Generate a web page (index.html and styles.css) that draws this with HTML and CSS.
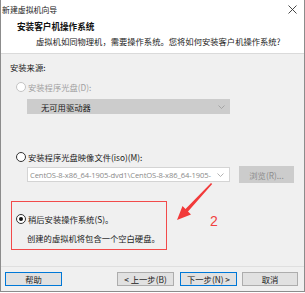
FILE: index.html
```html
<!DOCTYPE html>
<html lang="zh-CN">
<head>
<meta charset="utf-8">
<title>新建虚拟机向导</title>
<link rel="stylesheet" href="styles.css">
</head>
<body>
<div class="window">
  <div class="titlebar">
    <span class="title">新建虚拟机向导</span>
    <svg class="close" width="9" height="9" viewBox="0 0 9 9"><path d="M0.5 0.5L8.5 8.5M8.5 0.5L0.5 8.5" stroke="#333" stroke-width="0.9" fill="none"/></svg>
  </div>
  <div class="header">
    <div class="h-title">安装客户机操作系统</div>
    <div class="h-sub">虚拟机如同物理机，需要操作系统。您将如何安装客户机操作系统?</div>
  </div>
  <div class="body">
    <div class="label">安装来源:</div>
    <div class="radio-row disabled r1"><span class="radio"></span><span>安装程序光盘(D):</span></div>
    <div class="select-row">
      <div class="select drive"><span>无可用驱动器</span><svg class="chev" width="7" height="4" viewBox="0 0 7 4"><path d="M0.5 0.5L3.5 3.5L6.5 0.5" stroke="#9a9a9a" stroke-width="0.8" fill="none"/></svg></div>
    </div>
    <div class="radio-row r2"><span class="radio"></span><span>安装程序光盘映像文件(iso)(M):</span></div>
    <div class="select-row iso-row">
      <div class="select iso"><span class="iso-text">CentOS-8-x86_64-1905-dvd1\CentOS-8-x86_64-1905-</span><svg class="chev" width="7" height="4" viewBox="0 0 7 4"><path d="M0.5 0.5L3.5 3.5L6.5 0.5" stroke="#a0a0a0" stroke-width="0.8" fill="none"/></svg></div>
      <div class="browse">浏览(R)...</div>
    </div>
    <div class="later-box">
      <div class="radio-row r3"><span class="radio checked"></span><span>稍后安装操作系统(S)。</span></div>
      <div class="note">创建的虚拟机将包含一个空白硬盘。</div>
    </div>
    <svg class="arrow" width="40" height="42" viewBox="0 0 40 42"><polygon points="35,0 36.2,1 12,28.5 15,31.5 1,37 6.5,23 9.5,26" fill="#f23a3a"/></svg>
    <div class="mark">2</div>
  </div>
  <div class="footer">
    <div class="btn focus help">帮助</div>
    <div class="btn prev">&lt; 上一步(B)</div>
    <div class="btn focus next">下一步(N) &gt;</div>
    <div class="btn cancel">取消</div>
  </div>
</div>
</body>
</html>
```
FILE: styles.css
```css
html, body {
  margin: 0;
  padding: 0;
  background: #ffffff;
}
body {
  font-family: "Noto Sans CJK SC", "Noto Sans", sans-serif;
  font-size: 8.3px;
  color: #1a1a1a;
}
.window {
  width: 305px;
  height: 292px;
  box-sizing: border-box;
  border: 1px solid #8c8c8c;
  border-top: none;
  background: #f0f0f0;
  display: flex;
  flex-direction: column;
  position: relative;
}
.titlebar {
  height: 20px;
  background: #fff;
  display: flex;
  align-items: center;
  justify-content: space-between;
  padding: 0 7px 0 1px;
}
.title {
  font-size: 7.9px;
  color: #222;
  line-height: 1;
}
.close {
  margin-top: -2px;
}
.header {
  height: 33px;
  background: #fff;
  border-bottom: 1px solid #dadada;
  padding-left: 16px;
}
.h-title {
  font-weight: bold;
  font-size: 8.6px;
  line-height: 13px;
  color: #111;
}
.h-sub {
  padding-left: 19px;
  line-height: 13px;
  margin-top: 2px;
  color: #222;
}
.body {
  flex: 1;
  position: relative;
  padding: 0 0 0 9px;
}
.label {
  margin-top: 7px;
  line-height: 12px;
}
.radio-row {
  display: flex;
  align-items: center;
  line-height: 12px;
}
.radio {
  width: 8px;
  height: 8px;
  border: 1px solid #333;
  border-radius: 50%;
  background: #fff;
  margin-right: 2px;
  box-sizing: content-box;
  position: relative;
}
.disabled {
  color: #a0a0a0;
}
.disabled .radio {
  border-color: #c4c4c4;
}
.radio.checked::after {
  content: "";
  position: absolute;
  left: 2px;
  top: 2px;
  width: 4px;
  height: 4px;
  border-radius: 50%;
  background: #111;
}
.r1 {
  margin-top: 8px;
  padding-left: 6px;
}
.select-row {
  display: flex;
  padding-left: 17px;
  margin-top: 6px;
}
.select {
  width: 203px;
  height: 15px;
  box-sizing: border-box;
  display: flex;
  align-items: center;
  justify-content: space-between;
  padding-right: 5px;
}
.drive {
  background: #cccccc;
  padding-left: 14px;
  color: #1a1a1a;
}
.r2 {
  margin-top: 37px;
  padding-left: 6px;
}
.iso-row {
  margin-top: 4px;
  align-items: flex-start;
}
.iso {
  background: #fff;
  border: 1px solid #d4d4d4;
  padding-left: 2px;
  color: #8a8a8a;
  overflow: hidden;
}
.iso-text {
  font-family: "Open Sans", "Noto Sans", sans-serif;
  font-size: 7.6px;
  white-space: nowrap;
  letter-spacing: -0.1px;
}
.browse {
  margin-left: 9px;
  width: 55px;
  height: 17px;
  margin-top: -1px;
  background: #cccccc;
  color: #8d8d8d;
  display: flex;
  align-items: center;
  justify-content: center;
}
.later-box {
  margin-top: 18px;
  margin-left: 1px;
  width: 156px;
  height: 49px;
  box-sizing: border-box;
  border: 1.5px solid #f24a4a;
  padding-left: 4px;
}
.r3 {
  margin-top: 11px;
}
.note {
  margin-top: 7px;
  padding-left: 11px;
  line-height: 12px;
}
.arrow {
  position: absolute;
  left: 175px;
  top: 129px;
}
.mark {
  position: absolute;
  left: 209px;
  top: 159px;
  font-family: "Liberation Sans", sans-serif;
  font-size: 14px;
  color: #f04040;
  line-height: 16px;
}
.footer {
  height: 25px;
  border-top: 1px solid #dfdfdf;
  display: flex;
  align-items: flex-start;
  padding: 5px 0 0 4px;
  box-sizing: border-box;
}
.btn {
  height: 14px;
  box-sizing: border-box;
  border: 1px solid #adadad;
  background: #e1e1e1;
  display: flex;
  align-items: center;
  justify-content: center;
  color: #1a1a1a;
}
.btn.focus {
  border-color: #0078d7;
}
.help {
  width: 57px;
}
.prev {
  width: 57px;
  margin-left: 55px;
}
.next {
  width: 57px;
  margin-left: 6px;
}
.cancel {
  width: 56px;
  margin-left: 5px;
}
```
